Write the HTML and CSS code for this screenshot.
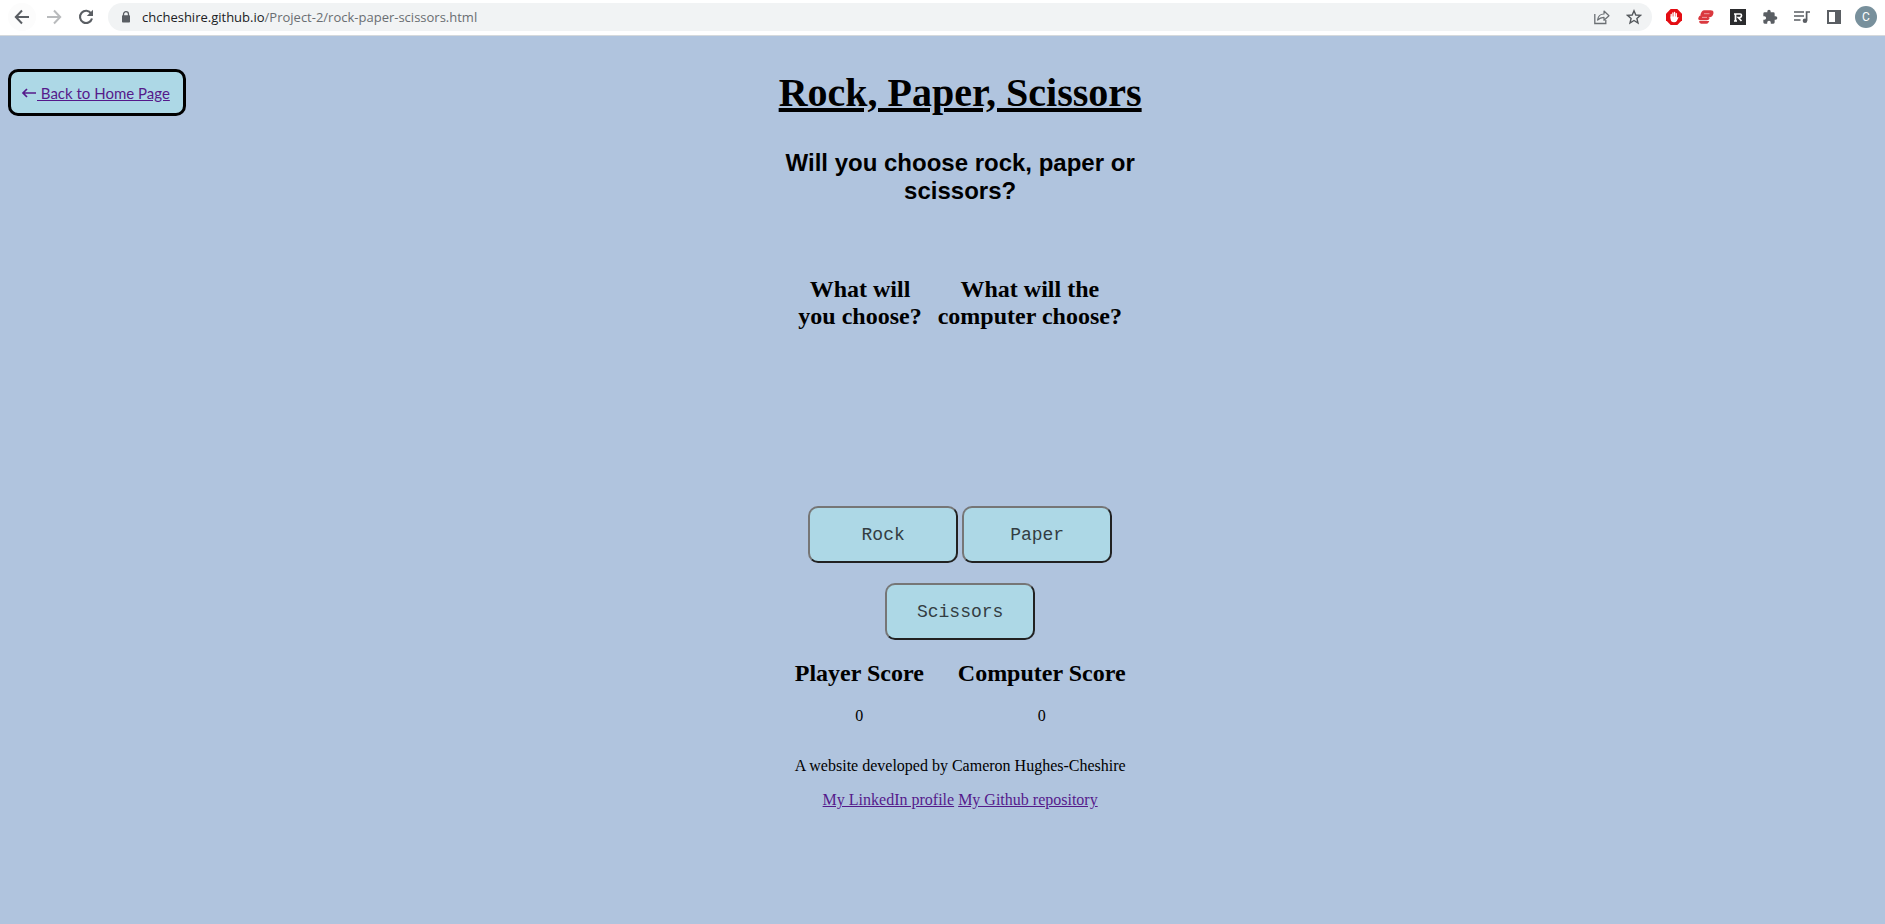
FILE: index.html
```html
<!DOCTYPE html>
<html lang="en">
<head>
<meta charset="utf-8">
<title>Rock, Paper, Scissors</title>
<link rel="stylesheet" href="styles.css">
</head>
<body>
<header class="toolbar">
  <nav class="nav-buttons">
    <button class="icon-button nav-back" aria-label="Back"><svg viewBox="0 0 16 16" width="16" height="16"><path d="M15 8H2M8 1.5 1.8 8 8 14.5" fill="none" stroke="#5a5e63" stroke-width="2"/></svg></button>
    <button class="icon-button" aria-label="Forward"><svg viewBox="0 0 16 16" width="16" height="16"><path d="M1 8h13M8 1.5 14.2 8 8 14.5" fill="none" stroke="#b9bbbd" stroke-width="2"/></svg></button>
    <button class="icon-button" aria-label="Reload"><svg viewBox="0 0 16 16" width="16" height="16"><path d="M13.2 4.5A6.1 6.1 0 1 0 14 9.5" fill="none" stroke="#5a5e63" stroke-width="2.1"/><path d="M15 .8V7H8.8z" fill="#5a5e63"/></svg></button>
  </nav>
  <div class="address">
    <svg viewBox="0 0 10 12" width="10" height="12"><path d="M2.5 5V3.2a2.5 2.5 0 0 1 5 0V5" fill="none" stroke="#5a5e63" stroke-width="1.3"/><rect x="1" y="4.3" width="8" height="7.2" rx=".8" fill="#5a5e63"/></svg>
    <span class="url"><span class="host">chcheshire.github.io</span>/Project-2/rock-paper-scissors.html</span>
    <button class="icon-button" aria-label="Share"><svg viewBox="0 0 16 16" width="16" height="16"><path d="M.8 5v9.5h11V11" fill="none" stroke="#6b6f73" stroke-width="1.3"/><path d="M3.6 11c.5-4 3-6 6.4-6V2l5 4.700-5 4.600V8.300C7.300 8.300 5.400 9 3.600 11z" fill="none" stroke="#6b6f73" stroke-width="1.2" stroke-linejoin="round"/></svg></button>
    <button class="icon-button" aria-label="Bookmark"><svg viewBox="0 0 16 16" width="16" height="16"><path d="M8 1.800 9.800 6l4.600.4-3.500 3 1.100 4.600-4-2.500-4 2.500 1.100-4.600-3.500-3L6.200 6z" fill="none" stroke="#54585c" stroke-width="1.4"/></svg></button>
  </div>
  <div class="extensions">
    <button class="icon-button" aria-label="Ad blocker"><svg viewBox="0 0 16 16" width="16" height="16"><path d="M4.700 0h6.600L16 4.700v6.600L11.300 16H4.700L0 11.300V4.700z" fill="#e40d13"/><path d="M5.200 9V5.400M6.900 8V3.900M8.600 8V3.400M10.300 8.500V4.600" stroke="#fff" stroke-width="1.300" stroke-linecap="round"/><path d="M4.600 7.500h6.300v1.600l.8-1.100q.9-.3.800.500l-1.700 3.500Q10 13.300 8 13.300q-3.200 0-3.400-3.300z" fill="#fff"/></svg></button>
    <button class="icon-button" aria-label="VPN"><svg viewBox="0 0 16 16" width="16" height="16"><path d="M6.300 1.300h6.400q3.200 0 2.700 3.200-.6 3.700-4 3.700H9.800q2 0 1.700 1.300-.5 1.700-2.500 1.700H2Q-.2 11.200.3 9.200.9 6.300 3.600 6.200H2.300Q3.500 1.300 6.300 1.300zM1.100 12h10.200l-1 1.800q-.5.900-2 .9H3.200q-2.100 0-2.100-2.700z" fill="#da393f"/><path d="M6 4.700h5.500M4 8.400h5" stroke="#f3b6b8" stroke-width=".8"/></svg></button>
    <button class="icon-button" aria-label="R extension"><svg viewBox="0 0 16 16" width="16" height="16"><path d="M0 0h16v16H0z" fill="#2b2c2e"/><path d="M5.500 12V5h4.700q1.300 0 1.300 1.500T10.200 8.500H8.300L11.500 12M4 5h2M4 12h3" fill="none" stroke="#fff" stroke-width="1.700"/></svg></button>
    <button class="icon-button" aria-label="Extensions"><svg viewBox="0 0 24 24" width="16" height="16"><path d="M20.500 11H19V7a2 2 0 0 0-2-2h-4V3.500a2.500 2.500 0 0 0-5 0V5H4a2 2 0 0 0-2 2v3.800h1.500a2.700 2.700 0 0 1 0 5.400H2V20a2 2 0 0 0 2 2h3.800v-1.500a2.700 2.700 0 0 1 5.400 0V22H17a2 2 0 0 0 2-2v-4h1.500a2.500 2.500 0 0 0 0-5z" fill="#5a5e63"/></svg></button>
    <button class="icon-button" aria-label="Media"><svg viewBox="0 0 16 16" width="16" height="16"><path d="M0 3h10M0 7h10M0 11h6.500" stroke="#5a5e63" stroke-width="1.500"/><path d="M12.600 11.500V3H16" fill="none" stroke="#5a5e63" stroke-width="1.700"/><circle cx="11" cy="11.700" r="2.300" fill="#5a5e63"/></svg></button>
    <button class="icon-button" aria-label="Side panel"><svg viewBox="0 0 16 16" width="16" height="16"><path d="M1 1h14v14H1zm2 2v10h6V3z" fill="#5a5e63" fill-rule="evenodd"/></svg></button>
    <button class="profile" aria-label="Profile">C</button>
  </div>
</header>
<div class="page">
  <aside><a class="home-link" href="#home"><svg viewBox="0 0 16 12" width="16" height="12"><path d="M15 6H2M6 2 2 6l4 4" fill="none" stroke="#551a8b" stroke-width="1.700"/></svg><span class="home-text">&nbsp;Back to Home Page</span></a></aside>
  <main class="game">
    <h1 class="title">Rock, Paper, Scissors</h1>
    <h2 class="prompt">Will you choose rock, paper or scissors?</h2>
    <section class="choices">
      <h2 class="heading">What will<br>you choose?</h2>
      <h2 class="heading">What will the<br>computer choose?</h2>
    </section>
    <section class="moves">
      <button class="move">Rock</button>
      <button class="move">Paper</button>
      <button class="move">Scissors</button>
    </section>
    <section class="scores">
      <div><h2 class="heading">Player Score</h2><p class="score">0</p></div>
      <div><h2 class="heading">Computer Score</h2><p class="score">0</p></div>
    </section>
    <footer class="credits">
      <p class="credit">A website developed by Cameron Hughes-Cheshire</p>
      <p class="credit"><a href="#linkedin">My LinkedIn profile</a> <a href="#github">My Github repository</a></p>
    </footer>
  </main>
</div>
</body>
</html>
```

FILE: styles.css
```css
* { box-sizing: border-box; }

body {
  margin: 0;
  min-height: 100vh;
  background: #b0c4de;
  font: 16px/18px "Liberation Serif", "Times New Roman", serif;
  color: #000;
}

.toolbar {
  display: flex;
  align-items: center;
  height: 36px;
  padding: 0 8px 1px;
  background: #fff;
  border-bottom: 1px solid #d5d9dc;
}

.nav-buttons { display: flex; gap: 4px; }

.icon-button {
  display: grid;
  place-items: center;
  width: 28px;
  height: 28px;
  padding: 0;
  border: 0;
  border-radius: 50%;
  background: none;
}

.nav-back { background: #fcfcfc; }

.address {
  display: flex;
  flex: 1;
  align-items: center;
  gap: 4px;
  height: 28px;
  margin-left: 8px;
  padding: 0 4px 0 13px;
  border-radius: 14px;
  background: #f1f3f4;
}

.url {
  flex: 1;
  margin-left: 7px;
  font: 13px/20px "Open Sans", sans-serif;
  color: #6a6e72;
}

.host { color: #202124; }

.extensions { display: flex; align-items: center; gap: 4px; margin-left: 8px; }

.profile {
  width: 22px;
  height: 22px;
  margin: 0 0 0 3px;
  padding: 0;
  border: 0;
  border-radius: 50%;
  background: #78909c;
  color: #fff;
  font: 12px/22px Roboto, sans-serif;
}

.page {
  display: grid;
  grid-template-columns: 21fr 380px 20fr;
  padding: 33px 9px 0 8px;
}

.home-link {
  display: inline-flex;
  align-items: center;
  min-width: 178px;
  height: 47px;
  padding: 0 10px;
  border: 3px solid #000;
  border-radius: 10px;
  background: #add8e6;
  font: 15px/20px "Comic Sans MS", Lato, sans-serif;
  text-decoration: none;
}

.home-text { text-decoration: underline; }

a { color: #551a8b; }

.game { padding-top: 1px; text-align: center; }

.title {
  margin: 0;
  font-size: 40px;
  line-height: 46px;
  text-decoration: underline;
}

.prompt {
  margin: 33px 0 0;
  font: bold 24px/28px "Liberation Sans", Arial, sans-serif;
}

.choices {
  display: flex;
  justify-content: center;
  gap: 16px;
  min-height: 230px;
  margin-top: 71px;
}

.heading {
  margin: 0;
  font-size: 24px;
  line-height: 27px;
}

.moves {
  display: flex;
  flex-wrap: wrap;
  justify-content: center;
  gap: 20px 4px;
}

.move {
  width: 150px;
  height: 57px;
  border: 2px solid;
  border-color: #767676 #212121 #212121 #767676;
  border-radius: 10px;
  background: #add8e6;
  color: #333d42;
  font: 18px/24px "Liberation Mono", monospace;
}

.scores {
  display: flex;
  justify-content: center;
  gap: 34px;
  margin-top: 20px;
}

.score { margin: 20px 0 0; }

.credits { margin-top: 32px; }

.credit { margin: 0 0 16px; }
```
